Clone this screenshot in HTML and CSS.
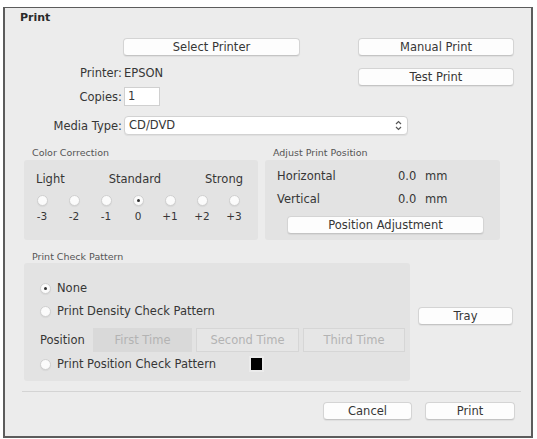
FILE: index.html
```html
<!DOCTYPE html>
<html>
<head>
<meta charset="utf-8">
<link rel="stylesheet" href="styles.css">
</head>
<body>
<div class="dialog">
  <div class="title">Print</div>

  <div class="top">
    <div class="left-col">
      <button class="btn btn-select">Select Printer</button>
      <div class="field-row row-printer">
        <span class="lbl">Printer:</span>
        <span class="val">EPSON</span>
      </div>
      <div class="field-row row-copies">
        <span class="lbl">Copies:</span>
        <span class="input">1</span>
      </div>
    </div>
    <div class="right-col">
      <button class="btn btn-side">Manual Print</button>
      <button class="btn btn-side btn-test">Test Print</button>
    </div>
  </div>

  <div class="field-row row-media">
    <span class="lbl">Media Type:</span>
    <span class="select">CD/DVD
      <svg class="updown" width="7" height="11" viewBox="0 0 7 11"><path d="M1 4 L3.5 1.5 L6 4 M1 7 L3.5 9.5 L6 7" fill="none" stroke="#555" stroke-width="1.2"/></svg>
    </span>
  </div>

  <div class="groups">
    <div class="group group-cc">
      <div class="glabel">Color Correction</div>
      <div class="gbox cc-box">
        <div class="cc-labels"><span>Light</span><span>Standard</span><span>Strong</span></div>
        <div class="cc-grid">
          <span class="radio"></span><span class="radio"></span><span class="radio"></span><span class="radio on"></span><span class="radio"></span><span class="radio"></span><span class="radio"></span>
          <span class="num">-3</span><span class="num">-2</span><span class="num">-1</span><span class="num">0</span><span class="num">+1</span><span class="num">+2</span><span class="num">+3</span>
        </div>
      </div>
    </div>
    <div class="group group-adj">
      <div class="glabel">Adjust Print Position</div>
      <div class="gbox adj-box">
        <div class="adj-row"><span>Horizontal</span><span>0.0</span><span>mm</span></div>
        <div class="adj-row adj-row2"><span>Vertical</span><span>0.0</span><span>mm</span></div>
        <button class="btn btn-posadj">Position Adjustment</button>
      </div>
    </div>
  </div>

  <div class="check-row">
    <div class="group group-check">
      <div class="glabel">Print Check Pattern</div>
      <div class="gbox check-box">
        <div class="opt opt-none"><span class="radio on"></span><span>None</span></div>
        <div class="opt opt-density"><span class="radio"></span><span>Print Density Check Pattern</span></div>
        <div class="pos-row">
          <span class="pos-lbl">Position</span>
          <span class="seg seg-first">First Time</span>
          <span class="seg seg-second">Second Time</span>
          <span class="seg seg-third">Third Time</span>
        </div>
        <div class="opt opt-pos">
          <span class="opt-main"><span class="radio"></span><span>Print Position Check Pattern</span></span>
          <span class="swatch"><span class="swatch-fill"></span></span>
        </div>
      </div>
    </div>
    <button class="btn btn-tray">Tray</button>
  </div>

  <div class="sep"></div>

  <div class="actions">
    <button class="btn btn-cancel">Cancel</button>
    <button class="btn btn-print">Print</button>
  </div>
</div>
</body>
</html>
```

FILE: styles.css
```css
* { box-sizing: border-box; }
html, body { margin: 0; padding: 0; background: #ffffff; }
body {
  font-family: "DejaVu Sans", "Liberation Sans", sans-serif;
  font-size: 11.5px;
  color: #363636;
}
.dialog {
  margin: 7px 0 0 3px;
  width: 530px;
  height: 431px;
  border: 2px solid #5c5c5c;
  border-top-width: 1px;
  background: #ececec;
  position: relative;
}
.title {
  font-weight: bold;
  font-size: 11px;
  line-height: 14px;
  padding: 3px 0 0 15px;
  height: 17px;
  color: #2a2a2a;
}
.btn {
  font-family: inherit;
  font-size: 11.5px;
  color: #363636;
  background: #fdfdfd;
  border: 1px solid #d4d4d4;
  border-bottom-color: #c4c4c4;
  border-radius: 4px;
  box-shadow: 0 1px 1px rgba(0,0,0,0.06);
  height: 18px;
  padding: 0;
  line-height: 16px;
  text-align: center;
  display: block;
}
.top {
  display: flex;
  margin-top: 13px;
}
.left-col { width: 353px; }
.btn-select { margin-left: 118px; width: 177px; }
.field-row {
  display: flex;
  align-items: center;
}
.lbl {
  width: 117px;
  text-align: right;
  margin-right: 2px;
  flex: none;
}
.row-printer { margin-top: 8px; height: 17px; }
.row-copies { margin-top: 6px; height: 19px; }
.input {
  width: 36px;
  height: 19px;
  background: #fff;
  border: 1px solid #d0d0d0;
  padding-left: 3px;
  line-height: 17px;
}
.right-col { display: flex; flex-direction: column; }
.btn-side { width: 156px; }
.btn-test { margin-top: 12px; }
.row-media { margin-top: 10px; height: 19px; }
.select {
  width: 284px;
  height: 19px;
  background: #fff;
  border: 1px solid #d2d2d2;
  border-radius: 4px;
  box-shadow: 0 1px 1px rgba(0,0,0,0.06);
  padding-left: 4px;
  line-height: 17px;
  display: flex;
  align-items: center;
  justify-content: space-between;
  padding-right: 5px;
}
.updown { display: block; }

.groups {
  display: flex;
  gap: 7px;
  margin: 13px 0 0 19px;
}
.glabel {
  font-size: 9.5px;
  line-height: 10px;
  height: 10px;
  padding-left: 8px;
  color: #555;
}
.gbox {
  margin-top: 2px;
  background: #e3e3e3;
  border-radius: 3px;
}
.group-cc { width: 234px; }
.group-adj { width: 235px; }
.cc-box { height: 80px; padding-top: 12px; }
.cc-labels {
  display: flex;
  justify-content: space-between;
  padding: 0 15px 0 12px;
  line-height: 14px;
  height: 14px;
}
.cc-grid {
  display: grid;
  grid-template-columns: repeat(7, 32px);
  margin: 9px 0 0 2px;
  justify-items: center;
  row-gap: 4px;
}
.radio {
  width: 11px;
  height: 11px;
  border-radius: 50%;
  background: #fbfbfb;
  border: 1px solid #cfcfcf;
  box-shadow: 0 1px 1px rgba(0,0,0,0.05);
  display: inline-flex;
  align-items: center;
  justify-content: center;
  flex: none;
}
.radio.on::after {
  content: "";
  width: 3px;
  height: 3px;
  border-radius: 50%;
  background: #333;
}
.num { line-height: 12px; font-size: 10.5px; }

.adj-box { height: 80px; padding-top: 9px; }
.adj-row {
  display: grid;
  grid-template-columns: 121px 27px auto;
  padding-left: 12px;
  line-height: 14px;
  height: 14px;
}
.adj-row2 { margin-top: 9px; }
.btn-posadj { margin: 10px 0 0 22px; width: 197px; }

.check-row {
  display: flex;
  margin: 12px 0 0 19px;
}
.group-check { width: 386px; }
.check-box { height: 118px; margin-top: 1px; padding: 17px 0 0 16px; }
.opt {
  display: flex;
  align-items: center;
  height: 16px;
  line-height: 16px;
}
.opt .radio { margin-right: 6px; }
.opt-density { margin-top: 7px; }
.pos-row {
  display: flex;
  align-items: center;
  margin-top: 9px;
  height: 24px;
}
.pos-lbl { width: 53px; }
.seg {
  height: 24px;
  line-height: 22px;
  text-align: center;
  color: #b3b3b3;
  border: 1px solid #d6d6d6;
  background: #e6e6e6;
  margin-right: 4px;
}
.seg-first { width: 99px; background: #d9d9d9; border-color: #d9d9d9; }
.seg-second { width: 103px; }
.seg-third { width: 102px; margin-right: 0; }
.opt-pos { margin-top: 4px; }
.opt-main { display: flex; align-items: center; width: 209px; }
.swatch {
  width: 15px;
  height: 16px;
  display: flex;
  align-items: center;
  justify-content: center;
  background: #ebebeb;
}
.swatch-fill { width: 11px; height: 12px; background: #000; }
.btn-tray { width: 95px; margin: 55px 0 0 8px; }

.sep {
  margin: 10px 0 0 17px;
  width: 499px;
  height: 1px;
  background: #d4d4d4;
}
.actions {
  display: flex;
  justify-content: flex-end;
  gap: 13px;
  margin-top: 10px;
  padding-right: 16px;
}
.btn-cancel { width: 89px; }
.btn-print { width: 90px; }
```
